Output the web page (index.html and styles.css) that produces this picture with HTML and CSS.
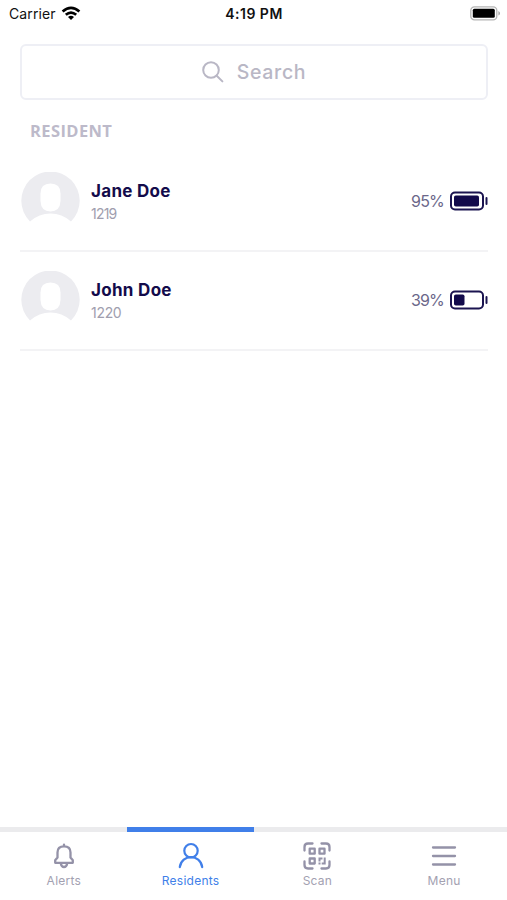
FILE: index.html
```html
<!DOCTYPE html>
<html lang="en">
<head>
<meta charset="utf-8">
<title>Residents</title>
<link rel="stylesheet" href="styles.css">
</head>
<body>
<div class="app">
  <header class="status">
    <div class="carrier">
      <span>Carrier</span>
      <svg width="20" height="15" viewBox="0 0 20 15" fill="none" stroke="#000" stroke-width="2.7"><path d="M1.6 5.5Q10 -1.8 18.4 5.5"/><path d="M4.8 8.8Q10 4.3 15.2 8.8"/><path d="M7 11Q10 8.7 13 11L10 14Z" fill="#000" stroke="none"/></svg>
    </div>
    <span class="clock">4:19 PM</span>
    <svg class="phone-battery" width="31" height="15" viewBox="0 0 31 15"><rect x=".8" y=".8" width="26" height="13" rx="3.6" fill="#fff" stroke="#b5b5b5" stroke-width="1.3"/><rect x="2.8" y="2.8" width="22" height="9" rx="1.5" fill="#000"/><path d="M28.4 5v4.6q1.6-.7 1.6-2.3T28.4 5Z" fill="#aaa"/></svg>
  </header>

  <main>
    <div class="search">
      <svg width="22" height="22" viewBox="0 0 22 22" fill="none" stroke="#b9b7c5" stroke-width="2" stroke-linecap="round"><circle cx="9" cy="9" r="7.8"/><path d="M14.7 14.7 20.4 20.4"/></svg>
      <span>Search</span>
    </div>
    <h2>RESIDENT</h2>
    <ul class="list">
      <li>
        <svg class="avatar" width="59" height="59" viewBox="0 0 59 59"><path d="M9 49.5A29.2 29.2 0 1 1 50 49.5Q41 41.5 29.5 41.5T9 49.5Z" fill="#ececf0"/><path d="M19.5 21.5Q19.5 11.5 29.5 11.5T39.5 21.5V29Q39 39.5 29.5 39.5T19.5 29Z" fill="#fff"/></svg>
        <div class="who"><strong>Jane Doe</strong><span class="narrow">1219</span></div>
        <div class="charge">
          <span>95%</span>
          <svg width="38" height="20" viewBox="0 0 38 20"><rect x="1" y="1.5" width="32" height="17" rx="4" fill="none" stroke="#1b1450" stroke-width="2"/><rect x="4" y="4.5" width="25" height="11" rx="1.8" fill="#120a4b"/><path d="M36.5 7v6" stroke="#1b1450" stroke-width="2" stroke-linecap="round"/></svg>
        </div>
      </li>
      <li>
        <svg class="avatar" width="59" height="59" viewBox="0 0 59 59"><path d="M9 49.5A29.2 29.2 0 1 1 50 49.5Q41 41.5 29.5 41.5T9 49.5Z" fill="#ececf0"/><path d="M19.5 21.5Q19.5 11.5 29.5 11.5T39.5 21.5V29Q39 39.5 29.5 39.5T19.5 29Z" fill="#fff"/></svg>
        <div class="who"><strong>John Doe</strong><span>1220</span></div>
        <div class="charge">
          <span>39%</span>
          <svg width="38" height="20" viewBox="0 0 38 20"><rect x="1" y="1.5" width="32" height="17" rx="4" fill="none" stroke="#1b1450" stroke-width="2"/><rect x="4" y="4.5" width="10.5" height="11" rx="1.8" fill="#120a4b"/><path d="M36.5 7v6" stroke="#1b1450" stroke-width="2" stroke-linecap="round"/></svg>
        </div>
      </li>
    </ul>
  </main>

  <nav>
    <a class="tab">
      <svg width="28" height="28" viewBox="0 0 28 28" fill="none" stroke="#9492a8" stroke-width="2.3" stroke-linejoin="round" stroke-linecap="round"><path d="M14 2.6V4M5.2 20.8V18.3L7.5 15.5V10.5Q7.5 4.4 14 4.4T20.5 10.5V15.5L22.8 18.3V20.8Z"/><path d="M10.8 21.5Q11.5 25 14 25T17.2 21.5"/></svg>
      <span>Alerts</span>
    </a>
    <a class="tab active">
      <svg width="28" height="28" viewBox="0 0 28 28" fill="none" stroke="#407fe9" stroke-width="2.2" stroke-linecap="round"><circle cx="14" cy="8.7" r="6.7"/><path d="M2.8 25.2C4.500 11.800 23.500 11.800 25.200 25.200"/></svg>
      <span>Residents</span>
    </a>
    <a class="tab">
      <svg width="28" height="28" viewBox="0 0 28 28" fill="none" stroke="#9492a8" stroke-width="2.3" stroke-linecap="round"><path d="M1.5 8.5V5Q1.5 1.5 5 1.5H9.5M18.5 1.5H23Q26.5 1.5 26.5 5V8.5M26.5 19.5V23Q26.5 26.5 23 26.5H18.5M9.5 26.5H5Q1.5 26.5 1.5 23V19.5"/><path d="M6.7 6.7h5v5h-5zM16.5 6.7h5v5h-5zM6.7 16.5h5v5h-5z" stroke-linejoin="round"/><path d="M15.5 15.5h4v2h-2v2h-2zM20.7 15.5h2v7h-4v-2h2zM15.5 20.5h2v2h-2z" fill="#9492a8" stroke="none"/></svg>
      <span>Scan</span>
    </a>
    <a class="tab">
      <svg width="28" height="28" viewBox="0 0 28 28" stroke="#9492a8" stroke-width="2.3" stroke-linecap="round"><path d="M3 5.5H25M3 14H25M3 22.5H25"/></svg>
      <span>Menu</span>
    </a>
  </nav>
</div>
</body>
</html>
```

FILE: styles.css
```css
* { box-sizing: border-box; }
body {
  margin: 0;
  background: #fff;
  font-family: Inter, "Liberation Sans", sans-serif;
}
.app { height: 900px; display: flex; flex-direction: column; }
svg { display: block; flex: none; }

.status {
  height: 28px;
  padding: 0 6px 2px 9px;
  display: grid;
  grid-template-columns: 1fr auto 1fr;
  align-items: center;
  color: #111;
  font-size: 14px;
}
.carrier { display: flex; align-items: center; gap: 5px; letter-spacing: .12px; }
.clock { font-weight: 600; letter-spacing: .5px; padding-right: 2px; }
.phone-battery { justify-self: end; }

main { flex: 1; padding: 16px 19px 0 20px; }
.search {
  height: 56px;
  border: 2px solid #eeeff5;
  border-radius: 6px;
  display: flex;
  align-items: center;
  justify-content: center;
  gap: 13px;
  color: #b9b7c5;
  font-size: 19.5px;
  font-weight: 500;
  letter-spacing: .65px;
}
h2 {
  margin: 19px 0 0 10px;
  height: 24px;
  font: 700 16.5px/24px "Open Sans", sans-serif;
  color: #bdbaca;
  letter-spacing: .4px;
}
.list { list-style: none; margin: 10px 0 0; padding: 0; }
.list li {
  height: 99px;
  border-bottom: 2px solid #f3f3f5;
  display: flex;
  align-items: center;
}
.avatar { margin-left: .5px; }
.who {
  flex: 1;
  margin-left: 11.5px;
  display: flex;
  flex-direction: column;
  font-size: 14px;
  line-height: 21px;
  letter-spacing: -.3px;
  color: #a09eae;
}
.who .narrow { letter-spacing: -.8px; }
.who strong {
  font-size: 17px;
  line-height: 24px;
  font-weight: 650;
  letter-spacing: .3px;
  color: #130b4b;
}
.charge {
  display: flex;
  align-items: center;
  gap: 6px;
  padding-bottom: 2px;
  font-size: 16px;
  letter-spacing: -.8px;
  color: #6b678a;
}

nav {
  height: 73.5px;
  display: grid;
  grid-template-columns: repeat(4, 1fr);
}
.tab {
  border-top: 5px solid #ebebed;
  padding: 10px 0 0 1px;
  display: flex;
  flex-direction: column;
  align-items: center;
  color: #a3a1b1;
  font-size: 12px;
  letter-spacing: .25px;
}
.tab span { line-height: 18px; margin-top: 2px; }
.tab.active { border-color: #407fe9; color: #407fe9; }
```
